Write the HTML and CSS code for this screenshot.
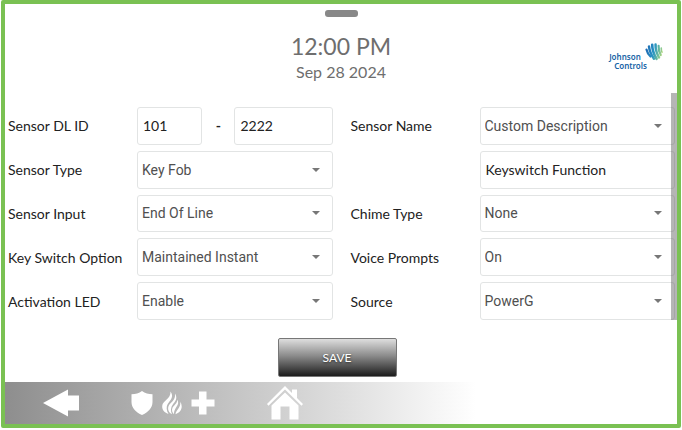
FILE: index.html
```html
<!DOCTYPE html>
<html lang="en">
<head>
<meta charset="utf-8">
<title>Sensor Settings</title>
<link rel="stylesheet" href="styles.css">
</head>
<body>
<main class="panel">
  <header class="header">
    <span class="handle"></span>
    <div class="time">12:00 PM</div>
    <div class="date">Sep 28 2024</div>
    <div class="brand">
      <div class="brand-name"><span>Johnson</span><span class="brand-second">Controls</span></div>
      <svg class="brand-mark" viewBox="0 0 18 18" aria-hidden="true">
        <defs>
          <linearGradient id="mark" gradientUnits="userSpaceOnUse" x1="0" x2="18" y1="4" y2="8">
            <stop offset="0" stop-color="#1c62b0"/>
            <stop offset="0.5" stop-color="#2793c4"/>
            <stop offset="0.8" stop-color="#6fbf9c"/>
            <stop offset="1" stop-color="#b4d67c"/>
          </linearGradient>
        </defs>
        <g fill="none" stroke="url(#mark)" stroke-linecap="round">
          <path stroke-width="2.200" d="M1.500 6.500C2 9 3 11 5.500 13.500"/>
          <path stroke-width="2.500" d="M4 3.500C4.400 7.500 6 11.500 9 15.800"/>
          <path stroke-width="2.600" d="M7.200 1.800C7.200 6.500 8.600 11 11.600 15.800"/>
          <path stroke-width="2.500" d="M10.600 1.600C10.400 6 11.600 10 14 14.500"/>
          <path stroke-width="2.200" d="M13.600 2.800C13.400 6 14.200 9 15.800 12"/>
          <path stroke-width="1.600" d="M16.300 5C16.200 6.500 16.400 8 17 9.200"/>
        </g>
      </svg>
    </div>
  </header>

  <form class="form" id="sensor">
    <div class="group">
      <label for="dl1">Sensor DL ID</label>
      <div class="pair">
        <input class="field" id="dl1" type="text" value="101">
        <span class="dash">-</span>
        <input class="field" type="text" value="2222" aria-label="Sensor DL ID, second part">
      </div>
      <label for="type">Sensor Type</label>
      <div class="drop"><select class="field" id="type"><option>Key Fob</option></select></div>
      <label for="input">Sensor Input</label>
      <div class="drop"><select class="field" id="input"><option>End Of Line</option></select></div>
      <label for="option">Key Switch Option</label>
      <div class="drop"><select class="field" id="option"><option>Maintained Instant</option></select></div>
      <label for="led">Activation LED</label>
      <div class="drop"><select class="field" id="led"><option>Enable</option></select></div>
    </div>
    <div class="group">
      <label for="name">Sensor Name</label>
      <div class="drop"><select class="field" id="name"><option>Custom Description</option></select></div>
      <input class="field custom" type="text" value="Keyswitch Function" aria-label="Custom description">
      <label for="chime">Chime Type</label>
      <div class="drop"><select class="field" id="chime"><option>None</option></select></div>
      <label for="voice">Voice Prompts</label>
      <div class="drop"><select class="field" id="voice"><option>On</option></select></div>
      <label for="source">Source</label>
      <div class="drop"><select class="field" id="source"><option>PowerG</option></select></div>
    </div>
    <span class="scrollbar"></span>
  </form>

  <div class="actions"><button class="save" type="submit" form="sensor">SAVE</button></div>

  <nav class="nav">
    <button class="nav-button" type="button" aria-label="Back">
      <svg width="36" height="28" viewBox="0 0 36 28"><path d="M0 14 25 0.500V6.500H36V21.500H25V27.500Z"/></svg>
    </button>
    <button class="nav-button alarms" type="button" aria-label="Emergency">
      <svg width="22" height="26" viewBox="0 0 22 26"><path d="M11 1C8 3.200 4.500 4.200 0.500 4.200V12C0.500 18 5 22.500 11 25 17 22.500 21.500 18 21.500 12V4.200C17.500 4.200 14 3.200 11 1Z"/></svg>
      <svg width="20" height="24" viewBox="0 0 20 24">
        <path d="M8.500 0.500C12.500 6 8 9.500 5.700 13 4 16 4.500 19.500 6.500 23 2 21.500 0 18.500 0.200 15 0.600 9.500 9 8 8.500 0.500Z"/>
        <path d="M13 2.500C16 7.500 13.200 10.500 10.800 13.500 8.600 16.500 8.500 20 10 23.300 6.500 21.500 5.600 18.500 6.400 15.500 7.800 11.500 14 9.500 13 2.500Z"/>
        <path d="M15.200 8.500C17.500 12.500 15 15 13.500 17.500 12.300 19.500 12 21 12 23.300 10 21.500 9.500 19 10.500 16.800 12 14 15.500 12.500 15.200 8.500Z"/>
        <path d="M18.300 10.500C21 15.500 20 21 13.500 23.300 14 18.500 19 17 18.300 10.500Z"/>
      </svg>
      <svg width="24" height="24" viewBox="0 0 24 24"><path d="M8 0.500H15.500V8.500H23.500V15.500H15.500V23.500H8V15.500H0.500V8.500H8Z"/></svg>
    </button>
    <button class="nav-button home" type="button" aria-label="Home">
      <svg width="36" height="34" viewBox="0 0 36 34">
        <path d="M18 0 25 7V3.500H30V12L36 18 34.500 19.800 18 3.500 1.500 19.800 0 18Z"/>
        <path d="M18 6.500 31.500 19.500V33.500H22.500V20.500H13.500V33.500H4.500V19.500Z"/>
      </svg>
    </button>
  </nav>
</main>
</body>
</html>
```
FILE: styles.css
```css
* {
  box-sizing: border-box;
}

body {
  margin: 0;
  padding: 0 1px 2px;
  background: #fff;
  color: #222;
  font-family: Lato, sans-serif;
  font-size: 14px;
}

.panel {
  display: flex;
  flex-direction: column;
  min-height: calc(100vh - 2px);
  border: 4px solid #7ac153;
  border-radius: 2px;
}

.header {
  position: relative;
  display: flex;
  flex-direction: column;
  align-items: center;
  padding: 6px 0 9px;
  color: #6e6e6e;
}

.handle {
  width: 33px;
  height: 7px;
  border-radius: 3px;
  background: #888;
}

.time {
  margin-top: 16px;
  font-size: 23px;
  line-height: 26px;
}

.date {
  font-size: 16px;
  line-height: 25px;
}

.brand {
  position: absolute;
  top: 39px;
  right: 14px;
  display: flex;
}

.brand-name {
  display: flex;
  flex-direction: column;
  padding-top: 9px;
  color: #1763a6;
  font-family: "Noto Sans", sans-serif;
  font-size: 8px;
  font-weight: 600;
  line-height: 9px;
}

.brand-second {
  margin-left: 5px;
  margin-right: -2px;
}

.brand-mark {
  width: 18px;
  height: 18px;
}

.form {
  position: relative;
  flex: 1;
  display: grid;
  grid-template-columns: 1fr 1fr;
  gap: 18px;
  padding: 14px 2px 0 3px;
}

.group {
  display: grid;
  grid-template-columns: 129px 1fr;
  grid-auto-rows: 1fr;
  row-gap: 6px;
  align-items: center;
}

.pair {
  display: grid;
  grid-template-columns: 2fr 32px 3fr;
  align-items: center;
  height: 100%;
}

.drop {
  position: relative;
  height: 100%;
}

.drop::after {
  content: "";
  position: absolute;
  top: 50%;
  right: 13px;
  margin-top: -2px;
  border: 4px solid transparent;
  border-top-color: #777;
  border-bottom: 0;
  pointer-events: none;
}

.field {
  width: 100%;
  height: 100%;
  min-width: 0;
  margin: 0;
  padding: 0 5px;
  border: 1px solid #e2e4e4;
  border-radius: 3px;
  background: #fff;
  color: #222;
  font: 14px Lato, sans-serif;
  appearance: none;
}

select.field {
  padding: 0 4px;
  color: #505050;
  font: 14px Roboto, sans-serif;
}

.dash {
  text-align: center;
  font-weight: 700;
}

.custom {
  grid-column: 2;
}

.scrollbar {
  position: absolute;
  top: 0;
  right: 0;
  bottom: 0;
  width: 6px;
  background: rgba(90, 90, 90, 0.45);
}

.actions {
  display: flex;
  justify-content: center;
  padding: 18px 8px 5px 0;
}

.save {
  width: 119px;
  height: 39px;
  border: 1px solid #777;
  border-radius: 2px;
  background: linear-gradient(#dedede, #8c8c8c 45%, #1c1c1c);
  color: #fff;
  font: 12px Lato, sans-serif;
  text-shadow: 0 1px 2px #333;
}

.nav {
  display: flex;
  align-items: center;
  height: 42px;
  padding-left: 38px;
  background: linear-gradient(90deg, #8e8e8e, #dedede 50%, #fff 70%);
}

.nav-button {
  display: flex;
  align-items: center;
  gap: 9px;
  padding: 0;
  border: 0;
  background: none;
}

.nav-button svg {
  fill: #fff;
}

.alarms {
  margin-left: 52px;
}

.home {
  margin-left: 52px;
}
```
